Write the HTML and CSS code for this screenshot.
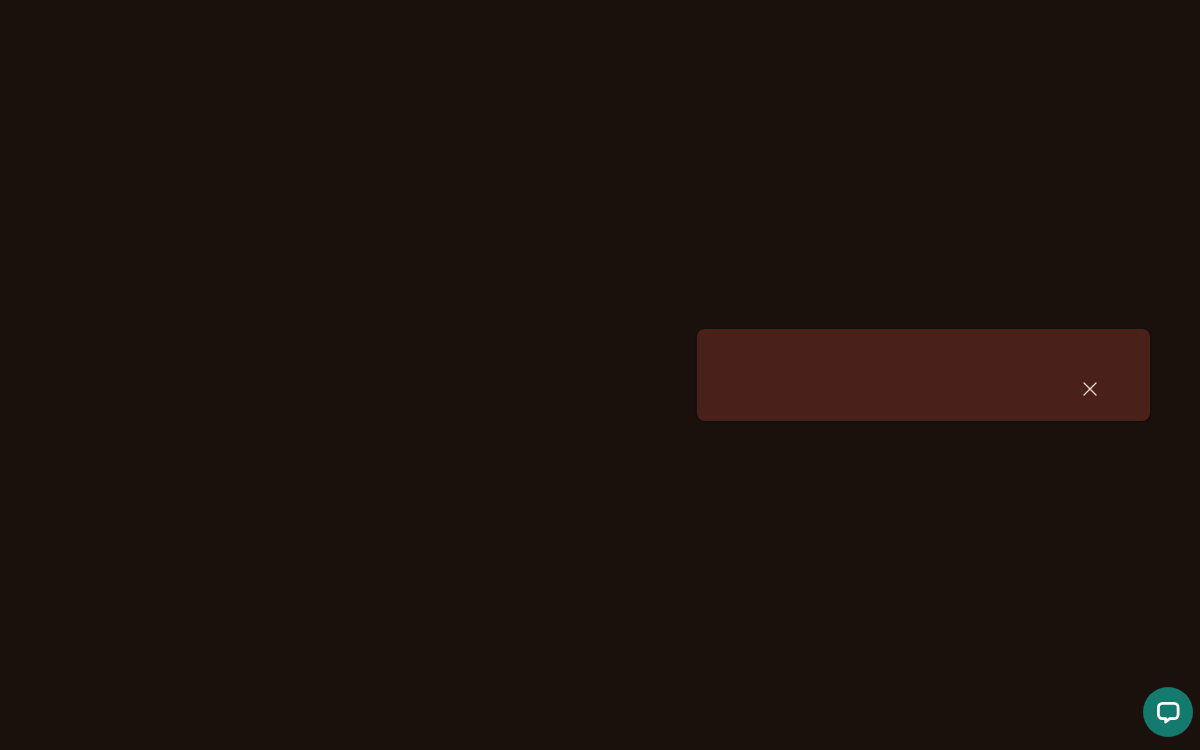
FILE: index.html
```html
<!DOCTYPE html>
<html lang="en">
<head>
<meta charset="utf-8">
<title>Notice</title>
<link rel="stylesheet" href="styles.css">
</head>
<body>
<div class="toast" role="alert">
  <button class="close" aria-label="Close">
    <svg width="16" height="16" viewBox="0 0 16 16" fill="none" stroke="#f5dcd2" stroke-width="1.3" stroke-linecap="round"><path d="M2 2l12 12M14 2L2 14"/></svg>
  </button>
</div>
<button class="chat" aria-label="Open chat">
  <svg width="32" height="32" viewBox="0 0 32 32" fill="none"><path d="M6.4 11.4a4 4 0 0 1 4-4h11.7a4 4 0 0 1 4 4v7.2a4 4 0 0 1-4 4h-4.4l-4 3.4v-3.4h-3.3a4 4 0 0 1-4-4z" stroke="#fff" stroke-width="2.8" stroke-linejoin="round"/></svg>
</button>
</body>
</html>
```

FILE: styles.css
```css
html, body {
  margin: 0;
  height: 100%;
  background: #1a110d;
  overflow: hidden;
}
.toast {
  position: absolute;
  left: 697px;
  top: 329px;
  width: 453px;
  height: 92px;
  box-sizing: border-box;
  background: #4a201a;
  border-radius: 8px;
  box-shadow: 0 1px 3px rgba(0, 0, 0, 0.3);
  display: flex;
  justify-content: flex-end;
  align-items: flex-start;
  padding: 52px 52px 0 0;
}
.close {
  width: 16px;
  height: 16px;
  padding: 0;
  border: 0;
  background: none;
  display: block;
}
.close svg { display: block; }
.chat {
  position: absolute;
  left: 1143px;
  top: 687px;
  width: 50px;
  height: 50px;
  padding: 0;
  border: 0;
  border-radius: 50%;
  background: #157a6e;
  display: flex;
  align-items: center;
  justify-content: center;
}
```
